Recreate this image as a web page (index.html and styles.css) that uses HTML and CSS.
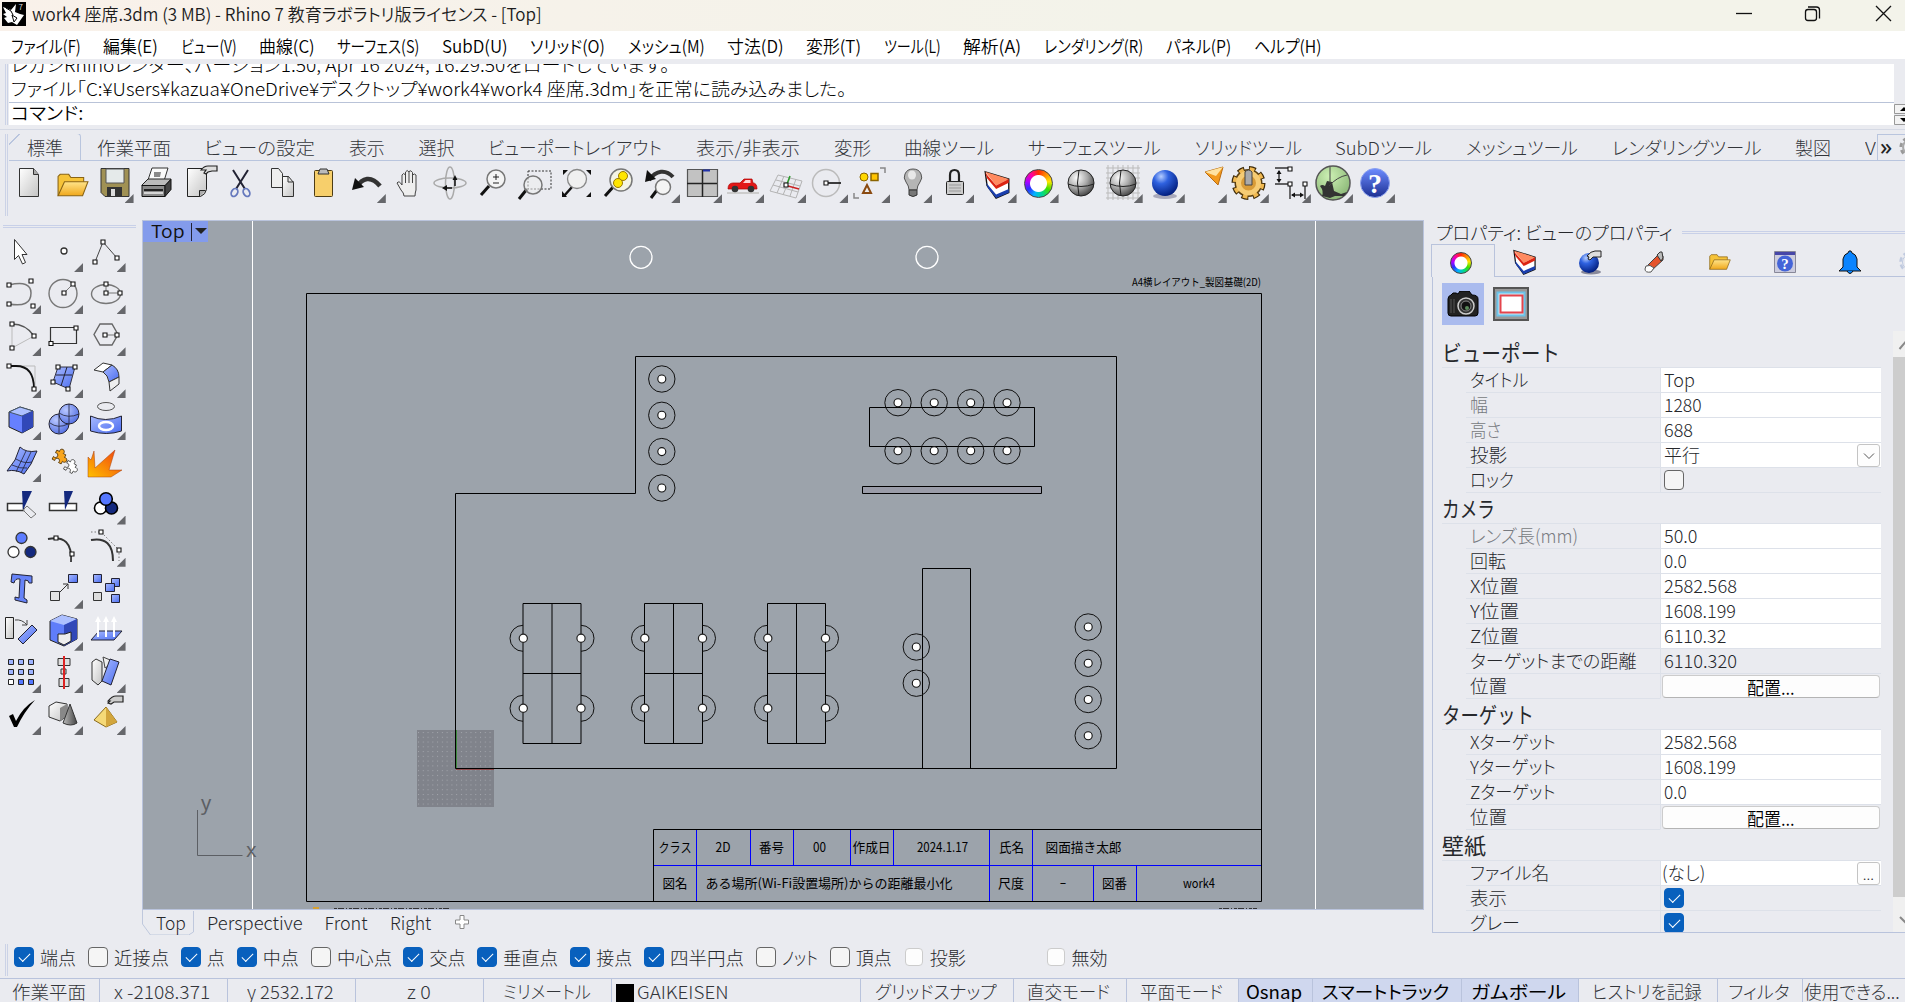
FILE: index.html
```html
<!DOCTYPE html>
<html lang="ja">
<head>
<meta charset="utf-8">
<title>work4 座席.3dm - Rhino 7</title>
<link rel="stylesheet" href="styles.css">
</head>
<body>
<svg class="defs" width="0" height="0">
  <defs>
    <linearGradient id="blue" x1="0" y1="0" x2="1" y2="1"><stop offset="0" stop-color="#a9bbff"/><stop offset="1" stop-color="#4a6cf0"/></linearGradient>
    <linearGradient id="gold" x1="0" y1="0" x2="0" y2="1"><stop offset="0" stop-color="#ffe48a"/><stop offset="1" stop-color="#f0a81c"/></linearGradient>
    <linearGradient id="grey" x1="0" y1="0" x2="1" y2="1"><stop offset="0" stop-color="#fff"/><stop offset="1" stop-color="#c4c4c4"/></linearGradient>
    <linearGradient id="dark" x1="0" y1="0" x2="1" y2="0"><stop offset="0" stop-color="#bbb"/><stop offset="1" stop-color="#444"/></linearGradient>
    <linearGradient id="fire" x1="0" y1="1" x2="1" y2="0"><stop offset="0" stop-color="#ffc000"/><stop offset="1" stop-color="#f03c10"/></linearGradient>
    <linearGradient id="help" x1="0" y1="0" x2="0" y2="1"><stop offset="0" stop-color="#6d8cff"/><stop offset="1" stop-color="#1c2f92"/></linearGradient>
    <radialGradient id="ball" cx=".35" cy=".3" r=".8"><stop offset="0" stop-color="#fff"/><stop offset=".5" stop-color="#a8a8a8"/><stop offset="1" stop-color="#333"/></radialGradient>
    <radialGradient id="bball" cx=".35" cy=".25" r=".8"><stop offset="0" stop-color="#b5cdff"/><stop offset=".35" stop-color="#2f62e0"/><stop offset="1" stop-color="#001a78"/></radialGradient>
    <radialGradient id="lball" cx=".35" cy=".3" r=".8"><stop offset="0" stop-color="#b9c8ff"/><stop offset="1" stop-color="#4b68e0"/></radialGradient>
    <radialGradient id="gball" cx=".4" cy=".3" r=".7"><stop offset="0" stop-color="#cdf0b4"/><stop offset="1" stop-color="#8cb878"/></radialGradient>
    <pattern id="dots" x="418" y="732" width="4.77" height="4.77" patternUnits="userSpaceOnUse"><rect width="1" height="1" fill="#a2a5ab"/></pattern>
    <symbol id="seat" viewBox="-15 -15 30 30" overflow="visible"><circle r="13.2" fill="none" stroke="#111"/><circle r="4" fill="#fff" stroke="#111" stroke-width="1.1"/></symbol>
    <symbol id="desk" viewBox="0 0 58 140" overflow="visible">
      <path d="M0 0H58V140H0zM29 0V140M0 70H58" fill="none" stroke="#000"/>
      <path d="M0 21.8A13 13 0 0 0 0 47.8M0 91.8A13 13 0 0 0 0 117.8M58 21.8A13 13 0 0 1 58 47.8M58 91.8A13 13 0 0 1 58 117.8" fill="none" stroke="#111"/>
      <g fill="#fff" stroke="#222" stroke-width="1.2"><circle cx=".3" cy="34.8" r="4.1"/><circle cx=".3" cy="104.8" r="4.1"/><circle cx="58" cy="34.8" r="4.1"/><circle cx="58" cy="104.8" r="4.1"/></g>
    </symbol>
    <symbol id="layers" viewBox="0 0 30 32"><path d="M2 2L28 10V25L14 31 4 17z" fill="#fff" stroke="#111" stroke-width="1.5"/><path d="M3 14L14 27 28 21V25L14 31 5 20z" fill="#1b3fae"/><path d="M2 2L28 10 14 17z" fill="#ff8a60"/><path d="M2 3L14 17 28 10V14L14 21 4 9z" fill="#dc2412"/></symbol>
    <symbol id="folder" viewBox="0 0 30 22"><path d="M1 21V3l2-2h8l2 3h12v5" fill="#f6c338" stroke="#8a6414"/><path d="M1 21L7 8H29L24 21z" fill="url(#gold)" stroke="#8a6414"/></symbol>
    <symbol id="gear" viewBox="-16 -16 32 32"><circle r="8.500" fill="none" stroke="currentColor" stroke-width="7"/><circle r="13" fill="none" stroke="currentColor" stroke-width="5" stroke-dasharray="5.1 5.1"/></symbol>
    <symbol id="puzzle" viewBox="-10 -10 20 20" overflow="visible"><path d="M-6-6h3.500a2.800 2.800 0 1 1 5 0H6v3.500a2.800 2.800 0 1 1 0 5V6H2.500a2.800 2.800 0 1 0-5 0H-6V2.500a2.800 2.800 0 1 0 0-5z"/></symbol>
  </defs>
</svg>

<header class="titlebar">
  <svg class="appicon" width="24" height="24" viewBox="0 0 24 24"><rect width="24" height="24" fill="#000"/><path d="M1 5l8 3 5-6-1 8 5 2 4 1-7 10-5-3-4 1-4-5 3-1-4-3 3-1z" fill="#fff"/><path d="M10 13l5 3-3 4zM4 6l5 3 2 4" fill="none" stroke="#000"/><text x="16.500" y="8" font-size="8" fill="#ddd">7</text></svg>
  <span class="fit" data-w="510">work4 座席.3dm (3 MB) - Rhino 7 教育ラボラトリ版ライセンス - [Top]</span>
  <svg class="winbtns" width="170" height="28" viewBox="1735 0 170 28"><g fill="none" stroke="#111" stroke-width="1.3"><path d="M1736 13.500h16"/><rect x="1805.500" y="9.500" width="11" height="11" rx="2.500"/><path d="M1808 7h8.500q3 0 3 3v8.500"/><path d="M1876 6l15 15M1891 6l-15 15"/></g></svg>
</header>

<nav class="menubar">
  <span class="fit" data-w="70">ファイル(F)</span><span class="fit" data-w="55">編集(E)</span><span class="fit" data-w="56">ビュー(V)</span><span class="fit" data-w="56">曲線(C)</span><span class="fit" data-w="82">サーフェス(S)</span><span class="fit" data-w="66">SubD(U)</span><span class="fit" data-w="75">ソリッド(O)</span><span class="fit" data-w="77">メッシュ(M)</span><span class="fit" data-w="57">寸法(D)</span><span class="fit" data-w="55">変形(T)</span><span class="fit" data-w="57">ツール(L)</span><span class="fit" data-w="58">解析(A)</span><span class="fit" data-w="99">レンダリング(R)</span><span class="fit" data-w="65">パネル(P)</span><span class="fit" data-w="67">ヘルプ(H)</span>
</nav>

<section class="command">
  <div class="grip"></div>
  <div class="cmdbox">
    <div class="history">
      <div><span class="fit" data-w="659">レガシRhinoレンダー、バージョン1.50, Apr 16 2024, 16:29:50をロードしています。</span></div>
      <div><span class="fit" data-w="836">ファイル「C:¥Users¥kazua¥OneDrive¥デスクトップ¥work4¥work4 座席.3dm」を正常に読み込みました。</span></div>
    </div>
    <div class="prompt"><span class="fit" data-w="72">コマンド:</span></div>
  </div>
  <div class="cmdscroll"><svg width="11" height="10" viewBox="0 0 11 10"><path d="M12 .5H.5v9H12" fill="#f3f3f3" stroke="#999"/><path d="M6 7l4-4 4 4z"/></svg><svg width="11" height="10" viewBox="0 0 11 10"><path d="M12 .5H.5v9H12" fill="#f3f3f3" stroke="#999"/><path d="M6 3l4 4 4-4z"/></svg></div>
</section>

<section class="toolzone">
  <div class="grip"></div>
  <div class="toolcol">
    <div class="tabs">
      <span class="tab on"><span class="fit" data-w="36">標準</span></span>
      <span class="fit" data-w="74">作業平面</span><span class="fit" data-w="111">ビューの設定</span><span class="fit" data-w="36">表示</span><span class="fit" data-w="36">選択</span><span class="fit" data-w="174">ビューポートレイアウト</span><span class="fit" data-w="104">表示/非表示</span><span class="fit" data-w="37">変形</span><span class="fit" data-w="90">曲線ツール</span><span class="fit" data-w="133">サーフェスツール</span><span class="fit" data-w="107">ソリッドツール</span><span class="fit" data-w="97">SubDツール</span><span class="fit" data-w="112">メッシュツール</span><span class="fit" data-w="149">レンダリングツール</span><span class="fit" data-w="36">製図</span><span class="fit" data-w="11">V</span>
      <div class="more"><b>»</b><svg width="24" height="24" viewBox="0 0 24 24"><circle cx="12" cy="12" r="9" fill="none" stroke="#999" stroke-width="3" stroke-dasharray="4 3"/><circle cx="12" cy="12" r="7" fill="none" stroke="#aaa" stroke-width="2"/></svg></div>
    </div>
    <div class="icons">
      <i><svg viewBox="0 0 42 42"><path d="M11.500 6.500h14l5 6v22h-19z" fill="url(#grey)" stroke="#333"/><path d="M25.500 6.500v6h5" fill="#aaa" stroke="#333"/></svg></i>
      <i><svg viewBox="0 0 42 42"><use href="#folder" x="7" y="11" width="32" height="24"/></svg></i>
      <i class="fly"><svg viewBox="0 0 42 42"><path d="M8 6.500h28v28H12l-4-4z" fill="#a09154" stroke="#333"/><path d="M13 7h18v14H13z" fill="#e5eaea" stroke="#555"/><path d="M14 25h15v9H14z" fill="#333"/><path d="M18 27h4v7h-4z" fill="#ddd"/></svg></i>
      <i><svg viewBox="0 0 42 42"><path d="M13 18L17 6h16l-4 13" fill="#fafafa" stroke="#333"/><path d="M19 10h7l-1 5h-6z" fill="#888"/><path d="M7 23l6-6h23l-6 7H7z" fill="#bbb" stroke="#222"/><path d="M7 23.500h23v11H7z" fill="#8a8a8a" stroke="#111"/><path d="M30 23.500l6-6v10l-6 7z" fill="#444" stroke="#111"/><path d="M9 28h19" stroke="#222" stroke-width="2"/><path d="M9 31h19" stroke="#eee" stroke-width="1.500"/></svg></i>
      <i><svg viewBox="0 0 42 42"><path d="M10.500 6.500h19v21q-1 5-6 7h-13z" fill="url(#grey)" stroke="#222"/><path d="M22.500 34.500v-6h6" fill="#aaa" stroke="#222"/><path d="M24 8q3-4 7-4h3l6 0v5h-5l-4 1-2 2-2-1 2-3z" fill="#ddd" stroke="#222" stroke-width="1.200"/></svg></i>
      <i><svg viewBox="0 0 42 42"><path d="M14 8l12 19M29 8L17 27" stroke="#223" stroke-width="2"/><g fill="none" stroke="#6679bd" stroke-width="1.800"><ellipse cx="15.500" cy="30.500" rx="3" ry="4.200" transform="rotate(30 15.500 30.500)"/><ellipse cx="27.500" cy="30.500" rx="3" ry="4.200" transform="rotate(-30 27.500 30.500)"/></g></svg></i>
      <i><svg viewBox="0 0 42 42"><path d="M10.500 6.500h7l4 5v14h-11z" fill="#eee" stroke="#333"/><path d="M21.500 14.500h6l5 6v14h-11z" fill="url(#grey)" stroke="#333"/><path d="M27 14v6h6" fill="none" stroke="#333"/></svg></i>
      <i><svg viewBox="0 0 42 42"><rect x="11.500" y="8.500" width="18" height="26" rx="1" fill="#f7cf6b" stroke="#4d3c15"/><path d="M15 12l2-5h7l2 5z" fill="#bbb" stroke="#333"/></svg></i>
      <i class="fly"><svg viewBox="0 0 42 42"><path d="M12 25C17 16 26 13 35 24" fill="none" stroke="#333" stroke-width="4.500"/><path d="M7 28l3-12 9 9z" fill="#111"/></svg></i>
      <i><svg viewBox="0 0 42 42"><path d="M17 34q0-3-3-6l-4-7q2-3 5 2V13q1.500-3 3.500 0V10q1.500-3 3.500 0V9.500q2-2 3.500 1V13q2-2 3.500 0v15q-1 3-1 6z" fill="#eee" stroke="#444"/><path d="M18.500 12v9M22 10v11M25.500 11v10" stroke="#444"/></svg></i>
      <i><svg viewBox="0 0 42 42"><g fill="none" stroke="#aaa" stroke-width="1.500"><ellipse cx="21" cy="21" rx="4.500" ry="16"/><ellipse cx="21" cy="21" rx="16" ry="5"/></g><path d="M26 15v9m-9 2h6" stroke="#111" stroke-width="1.500"/><path d="M23.500 18l2.500-5 2.500 5zM18 23v6l-5-3z" fill="#111"/></svg></i>
      <i><svg viewBox="0 0 42 42"><path d="M10 33l8-9" stroke="#111" stroke-width="3"/><circle cx="25" cy="17" r="9" fill="#f4f4f4" stroke="#777" stroke-width="1.500"/><path d="M22 15h6m-3-3v6m-3 3h6" stroke="#222"/></svg></i>
      <i><svg viewBox="0 0 42 42"><path d="M15 9h23v18H15z" fill="none" stroke="#333" stroke-dasharray="2 1.500"/><path d="M6 37l8-10" stroke="#111" stroke-width="3"/><circle cx="20" cy="23" r="9" fill="#eee8" stroke="#777" stroke-width="1.500"/></svg></i>
      <i><svg viewBox="0 0 42 42"><path d="M8 8h5l-5 5zM36 8h-5l5 5zM36 35h-5l5-5zM7 35v-6l5 6z" fill="#111"/><path d="M9 34l8-9" stroke="#111" stroke-width="2.500"/><circle cx="22" cy="17" r="9.500" fill="#f0f0f0" stroke="#888" stroke-width="1.300"/></svg></i>
      <i><svg viewBox="0 0 42 42"><path d="M8 34l9-10" stroke="#111" stroke-width="3"/><circle cx="24" cy="18" r="11" fill="#f4f4e4" stroke="#777" stroke-width="1.500"/><circle cx="26" cy="14" r="4.500" fill="#ffe600" stroke="#997a00"/><circle cx="21" cy="21" r="4.500" fill="#ffe600" stroke="#997a00"/></svg></i>
      <i class="fly"><svg viewBox="0 0 42 42"><path d="M10 18C17 8 27 7 34 15" fill="none" stroke="#333" stroke-width="4"/><path d="M6 20l2-12 9 9z" fill="#111"/><path d="M12 36l6-8" stroke="#111" stroke-width="3"/><circle cx="24" cy="25" r="7.500" fill="#f4f4f4" stroke="#777" stroke-width="1.500"/></svg></i>
      <i class="fly"><svg viewBox="0 0 42 42"><path d="M6.500 7.500h30v27h-30z" fill="#c2c2c2" stroke="#555" stroke-width="1.200"/><path d="M21.500 8v27M6 21.500h30" stroke="#222" stroke-width="1.500"/><path d="M22 8.500h7" stroke="#2233aa" stroke-width="2"/></svg></i>
      <i class="fly"><svg viewBox="0 0 42 42"><path d="M4 31h32" stroke="#ccc" stroke-width="2"/><path d="M5 27q0-6 5-6h7l4-4h8l1 4q4 0 4 6z" fill="#e31818" stroke="#a00" stroke-width=".7"/><path d="M20 21l2.500-3h5v3z" fill="#ffd4d4"/><circle cx="12" cy="27" r="3.300" fill="#333"/><circle cx="28" cy="27" r="3.300" fill="#333"/></svg></i>
      <i class="fly"><svg viewBox="0 0 42 42"><path d="M13 13l24 6-6 17-26-7zM11 18l24 6M8 23l25 7M19 14l-7 17M25 16l-7 17M31 17l-6 17" fill="none" stroke="#b4b4b4"/><path d="M22 22l3-8" stroke="#2a9a2a" stroke-width="1.500"/><path d="M23 24l11 3" stroke="#c22" stroke-width="1.500"/><path class="h" d="M19 21h4v4h-4z"/></svg></i>
      <i class="fly"><svg viewBox="0 0 42 42"><circle cx="19" cy="21" r="13.500" fill="none" stroke="#bbb" stroke-width="1.500"/><path d="M20 21h14" stroke="#111" stroke-width="1.600"/><path class="h" d="M17 19h4v4h-4z"/></svg></i>
      <i class="fly"><svg viewBox="0 0 42 42"><path d="M31 6h5v5M5 31v5h5" fill="none" stroke="#888" stroke-width="1.500"/><circle cx="15" cy="15" r="4" fill="#ffd800" stroke="#8a6400"/><path d="M22 11.500h7v7h-7z" fill="#ffc400" stroke="#8a6400" stroke-width="1.500"/><path d="M14 31l4-8 4 8z" fill="#eee" stroke="#8a4a10" stroke-width="2"/></svg></i>
      <i class="fly"><svg viewBox="0 0 42 42"><path d="M18 28q0-4-3-8-3-4-1-8 2-5 8-5t8 5q2 4-1 8-3 4-3 8z" fill="#b5b5b5" stroke="#555"/><path d="M18 28h8v5q-4 3-8 0z" fill="#777" stroke="#333"/><ellipse cx="21" cy="13" rx="4" ry="4.500" fill="#e8e8e8"/></svg></i>
      <i class="fly"><svg viewBox="0 0 42 42"><path d="M17 20v-7q0-5 4.500-5t4.500 5v7" fill="none" stroke="#222" stroke-width="2.200"/><rect x="13.500" y="19.500" width="17" height="13" rx="1" fill="#ccc" stroke="#222"/><path d="M16 23h12M16 26h12M16 29h12" stroke="#999"/></svg></i>
      <i class="fly"><svg viewBox="0 0 42 42"><use href="#layers" x="8" y="8" width="28" height="29"/></svg></i>
      <i class="fly"><span class="wheel"></span></i>
      <i><svg viewBox="0 0 42 42"><circle cx="21" cy="21" r="13" fill="url(#ball)" stroke="#222"/><path d="M19 8q-3 13 0 26M8 22q13 5 26 0" fill="none" stroke="#222"/></svg></i>
      <i class="fly"><svg viewBox="0 0 42 42"><path d="M4 6h34M4 11h34M4 16h34M4 21h34M4 26h34M4 31h34M4 36h34M6 3v35M11 3v35M16 3v35M21 3v35M26 3v35M31 3v35M36 3v35" stroke="#bbb"/><circle cx="21" cy="21" r="13" fill="url(#ball)" stroke="#222"/><path d="M19 8q-3 13 0 26M8 22q13 5 26 0" fill="none" stroke="#222"/></svg></i>
      <i class="fly"><svg viewBox="0 0 42 42"><ellipse cx="21" cy="34" rx="12" ry="3" fill="#aab"/><circle cx="21" cy="21" r="13" fill="url(#bball)"/></svg></i>
      <i class="fly"><svg viewBox="0 0 42 42"><path d="M19 10L37 5 32 23z" fill="#f39a1c" stroke="#b96a10"/><path d="M19 10L37 5 30 14z" fill="#ffe3a0"/></svg></i>
      <i class="fly"><svg viewBox="0 0 42 42"><g fill="none" transform="translate(20.500 21)"><circle r="14" stroke="#3d2a08" stroke-width="6" stroke-dasharray="6.500 4.500"/><circle r="10" stroke="#5a3f10" stroke-width="8"/><circle r="13.500" stroke="#f0b850" stroke-width="4.500" stroke-dasharray="4.500 6.100" stroke-dashoffset="-.9"/><circle r="10" fill="#d99c38" stroke="#f6cc74" stroke-width="5"/></g><path d="M17 23v-13q3.500-4 7 0v13z" fill="#aaa" stroke="#444"/></svg></i>
      <i class="fly"><svg viewBox="0 0 42 42"><path d="M5 6h16M5 22h16M9 9v10M20 24v13M35 24v13M22 33h10" stroke="#333" stroke-width="1.400"/><path d="M6.500 12L9 8l2.500 4zM6.500 17L9 21l2.500-4zM25 30.500L21 33l4 2.500zM30 30.500L34 33l-4 2.500z" fill="#111"/><path class="h" d="M18 5h4v4h-4zM18 20h4v4h-4zM33 20h4v4h-4z"/></svg></i>
      <i class="fly"><svg viewBox="0 0 42 42"><circle cx="21" cy="21" r="17" fill="url(#gball)" stroke="#555" stroke-width="1.500"/><path d="M10 34q2-5-2-10 2-2 5 0l2-5 5 1 2 9 7 3 6-2-3 4-9 0-5 2z" fill="#333"/><path d="M18 5v16M35 13Q25 15 17 24" fill="none" stroke="#444"/></svg></i>
      <i class="fly"><svg viewBox="0 0 42 42"><circle cx="21" cy="21" r="14.500" fill="url(#help)" stroke="#8da2ef"/><text x="21" y="31" class="q">?</text></svg></i>
    </div>
  </div>
</section>

<main class="work">
  <aside class="left">
    <div class="hgrip"></div>
    <div class="palette">
      <i><svg viewBox="0 0 42 42"><path d="M14.500 8.500v20l4-4 4 8.500 3-1.500-3.500-8h5z" fill="#fff" stroke="#333"/></svg></i>
      <i class="fly"><svg viewBox="0 0 42 42"><circle cx="22" cy="20" r="3" fill="#fff" stroke="#333" stroke-width="1.300"/></svg></i>
      <i class="fly"><svg viewBox="0 0 42 42"><path d="M10 31L18 11 32 27" fill="none" stroke="#444"/><path class="h" d="M8 29h4v4h-4zM16 9h4v4h-4zM30 25h4v4h-4z"/></svg></i>

      <i class="fly"><svg viewBox="0 0 42 42"><path d="M9 12Q31 7 31 20 31 35 9 31" fill="none" stroke="#777" stroke-width="1.500"/><path class="h" d="M7 10h4v4h-4zM29 6h4v4h-4zM7 29h4v4h-4zM31 31h4v4h-4z"/></svg></i>
      <i class="fly"><svg viewBox="0 0 42 42"><circle cx="21" cy="20.500" r="14" fill="none" stroke="#777" stroke-width="1.400"/><path d="M22 20l9-9" stroke="#777"/><path class="h" d="M20 18h4v4h-4zM29 9h4v4h-4z"/></svg></i>
      <i class="fly"><svg viewBox="0 0 42 42"><ellipse cx="21" cy="21" rx="14.500" ry="9.500" fill="none" stroke="#777" stroke-width="1.400"/><path d="M21 11v9h14" fill="none" stroke="#777"/><path class="h" d="M19 9h4v4h-4zM19 18h4v4h-4zM33 18h4v4h-4z"/></svg></i>

      <i class="fly"><svg viewBox="0 0 42 42"><path d="M12 33V9M12 33l22-12" stroke="#bbb"/><path d="M12 9q14 0 22 12" fill="none" stroke="#555" stroke-width="1.400"/><path class="h" d="M10 7h4v4h-4zM32 19h4v4h-4zM10 31h4v4h-4z"/></svg></i>
      <i class="fly"><svg viewBox="0 0 42 42"><path d="M8.500 12.500h26v16h-26z" fill="none" stroke="#333" stroke-width="1.200"/><path class="h" d="M32 11h4v4h-4zM7 26.500h4v4h-4z"/></svg></i>
      <i class="fly"><svg viewBox="0 0 42 42"><path d="M15 9h12l6 10.500-6 10.500H15L9 19.500z" fill="none" stroke="#666" stroke-width="1.400"/><path d="M20 20h12" stroke="#777"/><path class="h" d="M18 18h4v4h-4zM30 18h4v4h-4z"/></svg></i>

      <i class="fly"><svg viewBox="0 0 42 42"><path d="M10 9h25v24" fill="none" stroke="#bbb"/><path d="M10 9h6q18 0 18 23" fill="none" stroke="#111" stroke-width="1.800"/><path class="h" d="M7 7h4v4h-4zM32 30h4v4h-4z"/></svg></i>
      <i class="fly"><svg viewBox="0 0 42 42"><path d="M16 10h17l-6 22-16-7z" fill="url(#blue)" stroke="#334"/><path d="M25 10l-6 19M14 18h16" stroke="#223"/><path class="h" d="M14 8h4v4h-4zM31 8h4v4h-4zM9 23h4v4h-4zM24 30h4v4h-4z"/></svg></i>
      <i class="fly"><svg viewBox="0 0 42 42"><path d="M9 13L18 6l9 2-9 7z" fill="#fff" stroke="#333"/><path d="M18 15l9-7q7 4 7 12l-10 5q-1-7-6-10z" fill="url(#blue)" stroke="#333"/><path d="M24 25l10-5v7l-9 7z" fill="#eee" stroke="#333"/></svg></i>

      <i class="fly"><svg viewBox="0 0 42 42"><path d="M9 13l11-5 13 4v16l-11 6-13-6z" fill="#6680ff" stroke="#222"/><path d="M9 13l11-5 13 4-11 5z" fill="#adc0ff" stroke="#456"/><path d="M22 17l11-5v16l-11 6z" fill="#3148b8"/></svg></i>
      <i class="fly"><svg viewBox="0 0 42 42"><circle cx="17" cy="25" r="10" fill="url(#lball)" stroke="#223"/><path d="M8 24q8 6 18 1M17 16v18" fill="none" stroke="#223" stroke-width=".8"/><circle cx="27" cy="15" r="10" fill="url(#lball)" stroke="#223"/><path d="M17 14q9 6 20 1M27 5v20" fill="none" stroke="#223" stroke-width=".8"/></svg></i>
      <i class="fly"><svg viewBox="0 0 42 42"><ellipse cx="21" cy="7.500" rx="8.500" ry="4" fill="none" stroke="#555"/><path d="M5.500 17q15 7 31 0v15q-15 5-31 0z" fill="url(#blue)" stroke="#223"/><ellipse cx="21" cy="27" rx="7" ry="4" fill="none" stroke="#fff" stroke-width="2.500"/></svg></i>

      <i class="fly"><svg viewBox="0 0 42 42"><path d="M20 6q6 6 17 4l-6 13-7 10q-8-5-17-3l8-11z" fill="url(#blue)" stroke="#223"/><path d="M16 18q8 5 16 3M12 24q8 4 15 3M26 10l-10 21M31 11L21 32" fill="none" stroke="#223" stroke-width=".8"/></svg></i>
      <i><svg viewBox="0 0 42 42"><g transform="translate(17 16) rotate(28)" fill="#f9a51c" stroke="#553a10"><use href="#puzzle" x="-8.500" y="-8.500" width="17" height="17"/></g><g transform="translate(28 26) rotate(28)" fill="#fff" stroke="#444"><use href="#puzzle" x="-8" y="-8" width="16" height="16"/></g></svg></i>
      <i><svg viewBox="0 0 42 42"><path d="M3 16l3 3 3-9 1 17L30 9l-6 20 13 0-11 7H3z" fill="url(#fire)" stroke="#a44010" stroke-width=".5"/></svg></i>

      <i><svg viewBox="0 0 42 42"><path d="M7.500 19.500h16v7h-16z" fill="#fff" stroke="#333" stroke-width="1.500"/><path d="M22 7h10l-9 19z" fill="#14297e"/><path d="M23 26l4-4 9 8-5 4z" fill="none" stroke="#777"/></svg></i>
      <i><svg viewBox="0 0 42 42"><path d="M7.500 19.500h27v7h-27z" fill="#fff" stroke="#333" stroke-width="1.500"/><path d="M22 7h9l-8 19z" fill="#14297e"/></svg></i>
      <i class="fly"><svg viewBox="0 0 42 42"><g stroke="#000" stroke-width="1.600"><circle cx="15.500" cy="24" r="6" fill="#fff"/><circle cx="26.500" cy="24" r="6" fill="#14297e"/><circle cx="21" cy="15" r="6.300" fill="#5577ff"/></g></svg></i>

      <i><svg viewBox="0 0 42 42"><g stroke="#333" stroke-width="1.300"><circle cx="21.500" cy="12" r="5.500" fill="#5c7cff"/><circle cx="13.500" cy="26" r="5.500" fill="#fff"/><circle cx="30.500" cy="26" r="5.500" fill="#14297e"/></g></svg></i>
      <i><svg viewBox="0 0 42 42"><path d="M6 13q25-5 23 23" fill="none" stroke="#333" stroke-width="1.800"/><path class="h" d="M12 10h4v4h-4zM28 26h4v4h-4z"/></svg></i>
      <i class="fly"><svg viewBox="0 0 42 42"><path d="M6 14q22-4 22 21" fill="none" stroke="#333" stroke-width="2"/><path d="M6 6h10l18 18v11" fill="none" stroke="#777" stroke-dasharray="1.500 2"/><path class="h" d="M14 4h4v4h-4zM32 22h4v4h-4z"/></svg></i>

      <i><svg viewBox="0 0 42 42"><path d="M12 6l20 2 0 7-3 0q0-3-4-3l-1 18 3 2v3l-12-3v-3l4 1 1-19q-5-1-6 4l-3-1z" fill="#6683f8" stroke="#223"/></svg></i>
      <i class="fly"><svg viewBox="0 0 42 42"><path d="M8.500 23.500h9v9h-9z" fill="#e5e5e5" stroke="#333"/><path d="M26.500 6.500h9v8h-9z" fill="url(#blue)" stroke="#223"/><path d="M18 24l8-8m-5 0h5v5" fill="none" stroke="#333"/></svg></i>
      <i><svg viewBox="0 0 42 42"><g stroke="#223" fill="url(#blue)"><path d="M8.500 6.500h8v8h-8z"/><path d="M26.500 10.500h8v8h-8z"/><path d="M20.500 15.500h9v8h-9z"/><path d="M26.500 26.500h8v8h-8z"/></g><path d="M8.500 24.500h8v8h-8z" fill="#ddd" stroke="#333"/></svg></i>

      <i><svg viewBox="0 0 42 42"><path d="M5.500 7.500h8v21h-8z" fill="url(#grey)" stroke="#222"/><path d="M32 15l5 5-14 14-5-5z" fill="url(#blue)" stroke="#223"/><path d="M15 10q7-1 12 5m-5 0h5v-5" fill="none" stroke="#444"/></svg></i>
      <i class="fly"><svg viewBox="0 0 42 42"><path d="M8 11L20 5l15 4v20L22 36 8 30z" fill="#5f7dfa" stroke="#222"/><path d="M8 11l12-6 15 4-13 6z" fill="#adc0ff"/><path d="M22 15l13-6v20L22 36z" fill="#3148b8"/><path d="M16 24h7l6-2v9l-7 4-6-3z" fill="#eee" stroke="#222"/></svg></i>
      <i class="fly"><svg viewBox="0 0 42 42"><path d="M6 30l8-9h23l-8 9z" fill="url(#blue)" stroke="#223"/><path d="M13 27V9m8 18V9m8 18V9" stroke="#fff" stroke-width="2"/><path d="M10 12L13 6l3 6zM18 12L21 6l3 6zM26 12L29 6l3 6z" fill="#fff"/></svg></i>

      <i class="fly"><svg viewBox="0 0 42 42"><g fill="#9db2ff" stroke="#222"><path d="M8.500 7.500h5v5h-5zM18.500 7.500h5v5h-5zM28.500 7.500h5v5h-5zM8.500 17.500h5v5h-5zM18.500 17.500h5v5h-5zM28.500 17.500h5v5h-5z"/><path d="M8.500 27.500h5v5h-5z" fill="#fff"/><path d="M18.500 27.500h5v5h-5zM28.500 27.500h5v5h-5z" fill="#5577ff"/></g></svg></i>
      <i class="fly"><svg viewBox="0 0 42 42"><path d="M16 6.500h12v7H16zM19 17h5v5h-5zM17 26.500h10v8H17z" fill="#ddd" stroke="#333"/><path d="M22 4v33" stroke="#d22" stroke-width="2"/></svg></i>
      <i class="fly"><svg viewBox="0 0 42 42"><path d="M7 10l4-3 6 3v19l-4 4-6-5z" fill="url(#grey)" stroke="#333"/><path d="M18 5l12 5-10 6z" fill="#eee" stroke="#444"/><path d="M25 7l9 3-8 23-9-4z" fill="url(#blue)" stroke="#223"/></svg></i>

      <i class="fly"><svg viewBox="0 0 42 42"><path d="M9 22l4-2 3 7Q23 13 35 6 24 18 17 33h-3z" fill="#000"/></svg></i>
      <i class="fly"><svg viewBox="0 0 42 42"><path d="M7 12l7-4 11 2v12l-7 5-11-4z" fill="url(#grey)" stroke="#333"/><path d="M18 14l7-4v12l-7 5z" fill="#888"/><path d="M28 10l7 19q-6 4-14 0z" fill="url(#dark)" stroke="#333"/></svg></i>
      <i class="fly"><svg viewBox="0 0 42 42"><path d="M21 13l11 15-11 5-12-7z" fill="#f5d977" stroke="#8a6a1c"/><path d="M21 13l11 15-11 5z" fill="#d2a53c"/><path d="M23 7q4-5 8-5h7v6h-5l-4 0-3 2-3-1 2-2z" fill="#ccc" stroke="#222" stroke-width="1.200"/></svg></i>
    </div>
  </aside>

  <section class="center">
    <div class="viewport">
      <svg class="drawing" viewBox="143 221 1281 688" width="1281" height="688">
        <g stroke="#fff" fill="none"><path d="M252.500 220V910M1315.500 220V910"/><circle cx="641" cy="257.300" r="11" stroke-width="1.300"/><circle cx="927" cy="257.300" r="11" stroke-width="1.300"/></g>
        <rect x="417" y="730" width="77" height="77" fill="#80838b"/><rect x="417" y="730" width="77" height="77" fill="url(#dots)"/>
        <g fill="none" stroke="#000">
          <path d="M306.500 293.500H1261.500V901.500H306.500z"/>
          <path d="M635.500 356.500H1116.500V768.500H455.500V493.500H635.500z"/>
          <path d="M869.500 407.500h165v39h-165zM922.500 768V568.500h48V768"/>
          <path d="M862.500 486.500h179v7h-179z" fill="#9a9ca8"/>
        </g>
        <path d="M456.500 730v38" stroke="#3d8a3d"/><path d="M456 769.500h38" stroke="#8f4a4c"/>
        <use href="#desk" x="523" y="603.500" width="58" height="140"/><use href="#desk" x="644.500" y="603.500" width="58" height="140"/><use href="#desk" x="767.500" y="603.500" width="58" height="140"/>
        <g>
          <use href="#seat" x="646.800" y="364" width="30" height="30"/><use href="#seat" x="646.800" y="400.300" width="30" height="30"/><use href="#seat" x="646.800" y="436.600" width="30" height="30"/><use href="#seat" x="646.800" y="473" width="30" height="30"/>
          <use href="#seat" x="883" y="387.700" width="30" height="30"/><use href="#seat" x="919.200" y="387.700" width="30" height="30"/><use href="#seat" x="955.700" y="387.700" width="30" height="30"/><use href="#seat" x="992" y="387.700" width="30" height="30"/>
          <use href="#seat" x="883" y="435.800" width="30" height="30"/><use href="#seat" x="919.200" y="435.800" width="30" height="30"/><use href="#seat" x="955.700" y="435.800" width="30" height="30"/><use href="#seat" x="992" y="435.800" width="30" height="30"/>
          <use href="#seat" x="901.300" y="632" width="30" height="30"/><use href="#seat" x="901.300" y="668.200" width="30" height="30"/>
          <use href="#seat" x="1073.200" y="612" width="30" height="30"/><use href="#seat" x="1073.200" y="648.300" width="30" height="30"/><use href="#seat" x="1073.200" y="684.500" width="30" height="30"/><use href="#seat" x="1073.200" y="720.700" width="30" height="30"/>
        </g>
        <path d="M197.500 810v45.500h45" fill="none" stroke="#5c5f64"/>
        <text x="201" y="810" class="axis">y</text><text x="246" y="857" class="axis">x</text>
        <path d="M653.500 902V829.500H1262" fill="none" stroke="#000"/>
        <path d="M654 865.500H1261M696.500 830V901M750.500 830V865M793.500 830V865M850.500 830V865M893.500 830V865M989.500 830V901M1032.500 830V901M1093.500 866V901M1136.500 866V901" stroke="#00f"/>
        <g class="note">
          <text x="1132" y="286" textLength="129" lengthAdjust="spacingAndGlyphs" class="tiny">A4横レイアウト_製図基礎(2D)</text>
          <text x="658.500" y="852" textLength="33" lengthAdjust="spacingAndGlyphs">クラス</text>
          <text x="715.500" y="852" textLength="15" lengthAdjust="spacingAndGlyphs">2D</text>
          <text x="759" y="852" textLength="25" lengthAdjust="spacingAndGlyphs">番号</text>
          <text x="813" y="852" textLength="13" lengthAdjust="spacingAndGlyphs">00</text>
          <text x="852.500" y="852" textLength="38" lengthAdjust="spacingAndGlyphs">作成日</text>
          <text x="917" y="852" textLength="51" lengthAdjust="spacingAndGlyphs">2024.1.17</text>
          <text x="999" y="852" textLength="25" lengthAdjust="spacingAndGlyphs">氏名</text>
          <text x="1045.500" y="852" textLength="76" lengthAdjust="spacingAndGlyphs">図面描き太郎</text>
          <text x="662.500" y="888" textLength="25" lengthAdjust="spacingAndGlyphs">図名</text>
          <text x="705.500" y="888" textLength="247" lengthAdjust="spacingAndGlyphs">ある場所(Wi-Fi設置場所)からの距離最小化</text>
          <text x="998" y="888" textLength="26" lengthAdjust="spacingAndGlyphs">尺度</text>
          <text x="1059.500" y="887" textLength="7" lengthAdjust="spacingAndGlyphs">-</text>
          <text x="1102" y="888" textLength="25" lengthAdjust="spacingAndGlyphs">図番</text>
          <text x="1183" y="888" textLength="32" lengthAdjust="spacingAndGlyphs">work4</text>
        </g>
        <path d="M334 908.500h116M1219 908.500h38" stroke="#333" stroke-dasharray="3 1 6 2 1 2"/><path d="M313 908h6" stroke="#d6a030" stroke-width="2"/>
      </svg>
      <div class="vlabel"><span class="fit" data-w="34">Top</span><b></b><i></i></div>
    </div>
    <div class="vtabs">
      <svg width="52" height="25" viewBox="0 0 52 25"><path d="M.5 0v14l8 11h38l5-3V1" fill="none" stroke="#bfc8dd"/></svg>
      <span class="fit" data-w="30">Top</span><span class="fit" data-w="96">Perspective</span><span class="fit" data-w="43">Front</span><span class="fit" data-w="41">Right</span>
      <svg class="plus" width="14" height="14" viewBox="0 0 14 14"><path d="M5 .5h4V5h4.500v4H9v4.500H5V9H.5V5H5z" fill="#fff" stroke="#888"/></svg>
    </div>
  </section>

  <aside class="props">
    <div class="ptitle"><span class="fit" data-w="237">プロパティ: ビューのプロパティ</span><div class="rule"></div></div>
    <div class="ptabs">
      <i class="on"><span class="wheel small"></span></i>
      <i><svg width="25" height="26"><use href="#layers"/></svg></i>
      <i><svg width="26" height="26" viewBox="0 0 26 26"><ellipse cx="14" cy="23" rx="10" ry="2.500" fill="#889"/><circle cx="12" cy="14" r="10" fill="url(#bball)"/><path d="M10 7q4-5 8-5h6v6h-4l-4 0-3 3-2-1 1-2z" fill="#ddd" stroke="#222"/></svg></i>
      <i><svg width="22" height="24" viewBox="0 0 22 24"><path d="M3 16L15 4l4 2v4L8 20z" fill="#e5532b" stroke="#444"/><path d="M2 16q4-2 8 2l-3 4q-6 1-6-3z" fill="#fff" stroke="#555"/><path d="M13 5l3-3 2 0 1 6-2 3z" fill="#bbb" stroke="#333"/></svg></i>
      <i><svg width="22" height="18"><use href="#folder"/></svg></i>
      <i><svg width="22" height="22" viewBox="0 0 22 22"><path d="M.5.500h21v21H.5z" fill="#ccd" stroke="#889"/><path d="M1 1h20v3H1z" fill="#4646a8"/><circle cx="11" cy="12.500" r="8" fill="#4464d8"/><text x="11" y="18" class="q2">?</text></svg></i>
      <i><svg width="24" height="24" viewBox="0 0 24 24"><path d="M1 21h22l-4-4V9q-1-5-5-6l-1-2h-2l-1 2q-4 1-5 6v8z" fill="#0a84ff" stroke="#111"/><path d="M9 21q3 5 6 0" fill="#0a84ff" stroke="#111"/></svg></i>
      <i class="cut"><svg width="24" height="24" viewBox="0 0 24 24"><circle cx="12" cy="12" r="9.500" fill="none" stroke="#c0cadf" stroke-width="2.500" stroke-dasharray="4.500 3"/><circle cx="12" cy="12" r="7.500" fill="none" stroke="#c0cadf"/><circle cx="12" cy="12" r="2.500" fill="#c0cadf"/></svg></i>
    </div>
    <div class="pbody">
      <div class="content">
        <div class="modes">
          <div class="mode on"><svg width="32" height="26" viewBox="0 0 32 26"><path d="M1 8q0-3 3-4l2-2h3l2 1 2-3h9l3 4q6 0 6 4v14q0 3-3 3H4q-3 0-3-3z" fill="#222" stroke="#000"/><path d="M4 8v14M7 8v14" stroke="#555"/><circle cx="19" cy="15" r="8" fill="#333" stroke="#ccc" stroke-width="1.500"/><circle cx="19" cy="15" r="5" fill="#111" stroke="#888"/><circle cx="20" cy="17" r="2" fill="#5a8a5a"/></svg></div>
          <svg width="36" height="34" viewBox="0 0 36 34"><path d="M1 1h34v32H1z" fill="#999" stroke="#555" stroke-width="2"/><path d="M4.500 5.500h27v23h-27z" fill="#cfe8f2" stroke="#6cc3ea" stroke-width="2"/><path d="M7.500 8.500h22v17h-22z" fill="#fff" stroke="#e4444c" stroke-width="2"/></svg>
        </div>
        <h2><span class="fit" data-w="118">ビューポート</span></h2>
        <div class="row"><label><span class="fit" data-w="58">タイトル</span></label><div class="val"><span class="fit" data-w="31">Top</span></div></div>
        <div class="row dim"><label><span class="fit" data-w="18">幅</span></label><div class="val"><span class="fit" data-w="38">1280</span></div></div>
        <div class="row dim"><label><span class="fit" data-w="31">高さ</span></label><div class="val"><span class="fit" data-w="29">688</span></div></div>
        <div class="row"><label><span class="fit" data-w="37">投影</span></label><div class="val"><span class="fit" data-w="36">平行</span><div class="mini"><svg width="12" height="8" viewBox="0 0 12 8"><path d="M1 1.500l5 5 5-5" fill="none" stroke="#555"/></svg></div></div></div>
        <div class="row"><label><span class="fit" data-w="44">ロック</span></label><div class="val flat"><u class="cb"></u></div></div>
        <h2><span class="fit" data-w="53">カメラ</span></h2>
        <div class="row dim"><label><span class="fit" data-w="108">レンズ長(mm)</span></label><div class="val"><span class="fit" data-w="33">50.0</span></div></div>
        <div class="row"><label><span class="fit" data-w="36">回転</span></label><div class="val"><span class="fit" data-w="23">0.0</span></div></div>
        <div class="row"><label><span class="fit" data-w="49">X位置</span></label><div class="val"><span class="fit" data-w="73">2582.568</span></div></div>
        <div class="row"><label><span class="fit" data-w="49">Y位置</span></label><div class="val"><span class="fit" data-w="72">1608.199</span></div></div>
        <div class="row"><label><span class="fit" data-w="49">Z位置</span></label><div class="val"><span class="fit" data-w="62">6110.32</span></div></div>
        <div class="row"><label><span class="fit" data-w="167">ターゲットまでの距離</span></label><div class="val flat"><span class="fit" data-w="73">6110.320</span></div></div>
        <div class="row"><label><span class="fit" data-w="37">位置</span></label><div class="val flat act"><button><span class="fit" data-w="48">配置...</span></button></div></div>
        <h2><span class="fit" data-w="92">ターゲット</span></h2>
        <div class="row"><label><span class="fit" data-w="86">Xターゲット</span></label><div class="val"><span class="fit" data-w="73">2582.568</span></div></div>
        <div class="row"><label><span class="fit" data-w="86">Yターゲット</span></label><div class="val"><span class="fit" data-w="72">1608.199</span></div></div>
        <div class="row"><label><span class="fit" data-w="86">Zターゲット</span></label><div class="val"><span class="fit" data-w="23">0.0</span></div></div>
        <div class="row"><label><span class="fit" data-w="37">位置</span></label><div class="val flat act"><button><span class="fit" data-w="48">配置...</span></button></div></div>
        <h2><span class="fit" data-w="44">壁紙</span></h2>
        <div class="row"><label><span class="fit" data-w="79">ファイル名</span></label><div class="val file"><span class="fit" data-w="43">(なし)</span><div class="mini">...</div></div></div>
        <div class="row"><label><span class="fit" data-w="37">表示</span></label><div class="val flat"><u class="cb on"></u></div></div>
        <div class="row"><label><span class="fit" data-w="50">グレー</span></label><div class="val flat"><u class="cb on"></u></div></div>
      </div>
      <div class="vscroll"><svg width="13" height="26" viewBox="0 0 13 26"><path d="M6.500 18l6-7 6 7" fill="none" stroke="#888" stroke-width="2"/></svg><div class="thumb"></div><svg width="13" height="35" viewBox="0 0 13 35"><path d="M7 20l6 6 6-6" fill="none" stroke="#888" stroke-width="2"/></svg></div>
    </div>
  </aside>
</main>

<section class="osnap">
  <div class="grip"></div>
  <div class="snaps">
    <span><u class="cb on"></u><span class="fit" data-w="36">端点</span></span>
    <span><u class="cb"></u><span class="fit" data-w="55">近接点</span></span>
    <span><u class="cb on"></u><span class="fit" data-w="18">点</span></span>
    <span><u class="cb on"></u><span class="fit" data-w="36">中点</span></span>
    <span><u class="cb"></u><span class="fit" data-w="55">中心点</span></span>
    <span><u class="cb on"></u><span class="fit" data-w="36">交点</span></span>
    <span><u class="cb on"></u><span class="fit" data-w="55">垂直点</span></span>
    <span><u class="cb on"></u><span class="fit" data-w="36">接点</span></span>
    <span><u class="cb on"></u><span class="fit" data-w="74">四半円点</span></span>
    <span><u class="cb"></u><span class="fit" data-w="36">ノット</span></span>
    <span><u class="cb"></u><span class="fit" data-w="36">頂点</span></span>
    <span><u class="cb off"></u><span class="fit" data-w="36">投影</span></span>
    <span class="last"><u class="cb off"></u><span class="fit" data-w="36">無効</span></span>
  </div>
</section>

<footer class="status">
  <div class="s1"><span class="fit" data-w="74">作業平面</span></div>
  <div class="s2"><span class="fit" data-w="96">x -2108.371</span></div>
  <div class="s2"><span class="fit" data-w="87">y 2532.172</span></div>
  <div class="s2"><span class="fit" data-w="24">z 0</span></div>
  <div class="s2"><span class="fit" data-w="88">ミリメートル</span></div>
  <div class="s3"><b class="swatch"></b><span class="fit" data-w="92">GAIKEISEN</span></div>
  <div class="s4"><span class="fit" data-w="122">グリッドスナップ</span></div>
  <div class="s5"><span class="fit" data-w="83">直交モード</span></div>
  <div class="s5b"><span class="fit" data-w="83">平面モード</span></div>
  <div class="s6 act"><span class="fit" data-w="56">Osnap</span></div>
  <div class="s7 act"><span class="fit" data-w="127">スマートトラック</span></div>
  <div class="s8 act"><span class="fit" data-w="95">ガムボール</span></div>
  <div class="s9"><span class="fit" data-w="110">ヒストリを記録</span></div>
  <div class="s10"><span class="fit" data-w="61">フィルタ</span></div>
  <div class="s11"><span class="fit" data-w="96">使用できる...</span></div>
</footer>
<script src="fit.js"></script>
</body>
</html>
```
FILE: styles.css
```css
* { box-sizing: border-box; }
body {
  margin: 0;
  width: 1905px;
  height: 1002px;
  overflow: hidden;
  display: flex;
  flex-direction: column;
  background: #eaebf0;
  color: #26282c;
  font: 300 18px/24px "Noto Sans CJK JP", sans-serif;
  font-feature-settings: "palt";
}
.defs { display: block; position: absolute; }
.fit { display: inline-block; flex: none; white-space: nowrap; transform-origin: 0 50%; }
i, u { font-style: normal; text-decoration: none; }
.h { fill: #fff; stroke: #111; stroke-width: 1.1; }

.titlebar { flex: none; height: 31px; display: flex; align-items: center; padding-left: 2px; background: linear-gradient(90deg, #f9f1ea, #f3f3ea 60%); font-weight: 350; font-size: 17.5px; color: #1c1c1c; }
.titlebar .appicon { margin-right: 6px; margin-top: -3px; }
.titlebar .fit { margin-top: -3px; }
.winbtns { margin-left: auto; margin-bottom: 3px; }

.menubar { flex: none; height: 28px; display: flex; gap: 22.6px; align-items: center; padding: 1px 0 0 11px; background: #fff; font-weight: 350; font-size: 17.5px; line-height: 20px; color: #000; }

.grip { flex: none; width: 3px; margin-left: 5px; border: 1px solid #cbd2e6; border-width: 0 1px; }
.command { flex: none; height: 71px; padding: 5px 0 4px; display: flex; border-bottom: 1px solid #d5d9e4; color: #000; }
.cmdbox { width: 1885px; margin-left: 1px; background: #fff; }
.history { height: 38px; overflow: hidden; padding-left: 2px; display: flex; flex-direction: column; justify-content: flex-end; padding-bottom: 2px; }
.history div { flex: none; height: 24px; }
.prompt { border-top: 1px solid #b9c3d8; height: 24px; line-height: 18px; padding-left: 2px; font-weight: 350; }
.cmdscroll { width: 11px; padding-top: 40px; display: flex; flex-direction: column; gap: 1px; overflow: hidden; }
.cmdscroll svg { display: block; flex: none; }

.toolzone { flex: none; height: 90px; display: flex; padding: 4px 0; }
.toolcol { flex: 1; margin-left: 1px; }
.tabs { position: relative; height: 27px; display: flex; align-items: center; gap: 33.7px; border-bottom: 1px solid #b9c5de; color: #33353a; overflow: hidden; }
.tab.on { height: 28px; padding: 1px 17px 0 18px; margin-right: -18px; border: 1px solid #b9c5de; border-width: 1px 1px 0 0; border-radius: 0 4px 0 0; background: linear-gradient(135deg, transparent 7px, #b9c5de 7px, #b9c5de 8px, #eaebf0 8px); }
.more { position: absolute; right: 0; top: 0; width: 28px; height: 27px; border: 1px solid #b9c5de; border-width: 1px 0 0 1px; background: #eaebf0; display: flex; }
.more b { width: 20px; padding-left: 2px; flex: none; font: 400 24px/22px "Noto Sans", sans-serif; color: #222; }
.more svg { flex: none; }
.icons { display: flex; padding-top: 1px; margin-left: -.6px; }
.icons i, .palette i { position: relative; width: 42.05px; height: 42px; flex: none; display: block; }
.icons svg, .palette svg { display: block; width: 42px; height: 42px; }
.fly::after { content: ""; position: absolute; right: 1px; bottom: 1px; width: 9px; height: 9px; background: #66676b; clip-path: polygon(100% 0, 100% 100%, 0 100%); }
.q { font: 700 28px "Liberation Serif", serif; fill: #fff; text-anchor: middle; }
.q2 { font: 700 15px "Liberation Serif", serif; fill: #fff; text-anchor: middle; }
.wheel { display: block; width: 29px; height: 29px; margin: 7px 0 0 6px; border-radius: 50%; background: radial-gradient(circle, #fff 0 8px, transparent 9px), conic-gradient(#ff2a00, #ff8a00, #ffe600, #40e000, #00d890, #00b4ff, #2a30ff, #b000ff, #ff00a0, #ff2a00); border: 1px solid #444; }
.icons .wheel { position: absolute; }
.wheel.small { width: 22px; height: 22px; margin: 0; background: radial-gradient(circle, #fff 0 6px, transparent 7px), conic-gradient(#ff2a00, #ff8a00, #ffe600, #40e000, #00d890, #00b4ff, #2a30ff, #b000ff, #ff00a0, #ff2a00); }

.work { flex: none; height: 716px; display: flex; }
.left { width: 142px; flex: none; }
.hgrip { height: 3px; margin: 5px 6px 0 3px; border: 1px solid #c8d0e8; border-width: 1px 0; }
.palette { display: grid; grid-template-columns: 42px 42.5px 42px; grid-auto-rows: 42.1px; padding-top: 3px; }

.center { width: 1282px; flex: none; }
.viewport { position: relative; height: 690px; border: 1px solid #b9c3dc; background: #9ca3ab; }
.drawing { display: block; }
.vlabel { position: absolute; left: 0; top: 0; width: 65px; height: 21px; background: #839bec; display: flex; align-items: center; padding: 0 0 2px 8px; font-size: 17px; color: #111; font-weight: 350; }
.vlabel b { width: 1px; height: 18px; background: #223; margin: 2px 3px 0 6px; flex: none; }
.vlabel i { border: 6px solid transparent; border-top-color: #222; border-bottom: 0; margin-top: 1px; }
.axis { font: 20px "Noto Sans", sans-serif; fill: #5c5f64; }
.note { font: 400 13px "Noto Sans CJK JP", sans-serif; fill: #000; }
.note .tiny { font-size: 10.5px; }
.vtabs { height: 26px; display: flex; align-items: center; gap: 22px; padding-bottom: 2px; }
.vtabs svg:first-child { align-self: flex-start; margin-right: -60px; }
.vtabs .fit:nth-of-type(2) { margin-left: -1px; }
.vtabs .plus { margin-left: 2px; }

.props { width: 481px; flex: none; overflow: hidden; padding-left: 7px; }
.ptitle { height: 24px; display: flex; align-items: center; gap: 9px; padding-left: 5px; }
.ptitle .fit { margin-top: -1px; }
.rule { flex: 1; height: 3px; border: 1px solid #c8d0e8; border-width: 1px 0; }
.ptabs { height: 33px; display: flex; }
.ptabs i { width: 65px; flex: none; border-bottom: 1px solid #b9c3dc; display: flex; align-items: center; justify-content: center; padding: 4px 6px 0 0; }
.ptabs .on { width: 64px; border: 1px solid #b9c3dc; border-bottom: 0; padding-right: 4px; }
.ptabs .cut { justify-content: flex-start; width: 30px; padding-left: 13px; }
.ptabs .cut svg { flex: none; }
.pbody { height: 656px; display: flex; margin-left: 1px; border: 1px solid #b9c3dc; border-width: 0 0 1px 1px; }
.content { width: 460px; flex: none; padding-left: 9px; height: 655px; overflow: hidden; }
.modes { height: 60px; padding-top: 6px; display: flex; gap: 9px; }
.modes > svg { margin-top: 4px; }
.mode { width: 42px; height: 42px; background: #aabbee; display: flex; align-items: center; justify-content: center; }
h2 { margin: 0; width: 439px; height: 31px; border-bottom: 1px solid #dde1e9; font: 400 22px/28px "Noto Sans CJK JP", sans-serif; }
.row { display: flex; height: 25px; width: 415px; margin-left: 24px; line-height: 23px; }
.row label { width: 194px; border-bottom: 1px solid #dde1e9; padding-left: 4px; }
.row.dim label { color: #777a80; }
.val { position: relative; width: 221px; height: 25px; border: 1px solid #dde1e9; border-width: 0 0 1px 1px; background: #fff; padding-left: 3px; display: flex; }
.val.flat { background: none; }
.val.act { padding: 1px 1px 1px 1px; border-bottom-color: transparent; }
.val.file { padding-left: 1px; }
.val .cb { margin: 2px 0 0; }
button { width: 218px; height: 23px; padding: 0; background: #fdfdfd; border: 1px solid #ccc; border-bottom-color: #b4b4b4; border-radius: 4px; font: 350 18px/20px "Noto Sans CJK JP", sans-serif; color: #000; }
.mini { width: 23px; height: 23px; margin: 1px 1px 0 auto; border: 1px solid #c4c4c4; border-radius: 3px; background: #fdfdfd; display: flex; align-items: center; justify-content: center; font-size: 15px; }
.vscroll { width: 13px; margin-top: 54px; background: #f0f0f0; display: flex; flex-direction: column; }
.vscroll svg { display: block; flex: none; }
.thumb { height: 540px; background: #cdcdcd; }

.cb { flex: none; display: block; width: 20px; height: 20px; border: 1px solid #666; border-radius: 4px; background: #f5f5f5; }
.cb.on { border-color: #0860bd; background: #0860bd; position: relative; }
.cb.on::after { content: ""; position: absolute; left: 4px; top: 5px; width: 10px; height: 5px; border: 1px solid #fff; border-width: 0 0 1px 1px; transform: rotate(-45deg); }
.cb.off { width: 18px; height: 18px; margin: 0 1px; border-color: #ccc; background: #fdfdfd; }

.osnap { flex: none; height: 42px; display: flex; padding: 8px 0 2px; }
.snaps { display: flex; align-items: center; gap: 11.9px; padding-left: 6px; height: 26px; }
.snaps > span { display: flex; align-items: center; gap: 6px; }
.snaps .last { margin-left: 68px; }

.status { flex: none; height: 24px; display: flex; border-top: 1px solid #b9c3dc; color: #33353a; }
.status div { flex: none; height: 24px; padding: 1px 2px 0 0; line-height: 23px; display: flex; justify-content: center; border-right: 1px solid #b9c3dc; }
.status .act { background: #cfd7ee; font-weight: 400; color: #000; }
.s1 { width: 100px; }
.s2 { width: 128px; }
.status .s3 { width: 249px; justify-content: flex-start; padding-left: 4px; gap: 3px; }
.swatch { width: 18px; height: 18px; margin-top: 4px; background: #000; }
.s4 { width: 153px; }
.s5 { width: 113px; }
.s5b { width: 112px; }
.s6 { width: 74px; }
.s7 { width: 149px; }
.s8 { width: 117px; }
.s9 { width: 139px; }
.s10 { width: 85px; }
.status .s11 { width: 104px; border: 0; justify-content: flex-start; padding-left: 1px; }
```
FILE: fit.js
```js
// Condense or widen each label so that it takes exactly its column width.
document.querySelectorAll('.fit').forEach(function (el) {
  var natural = el.offsetWidth;
  var target = Number(el.dataset.w);
  el.style.transform = 'scaleX(' + target / natural + ')';
  el.style.marginRight = (target - natural) + 'px';
});
```
